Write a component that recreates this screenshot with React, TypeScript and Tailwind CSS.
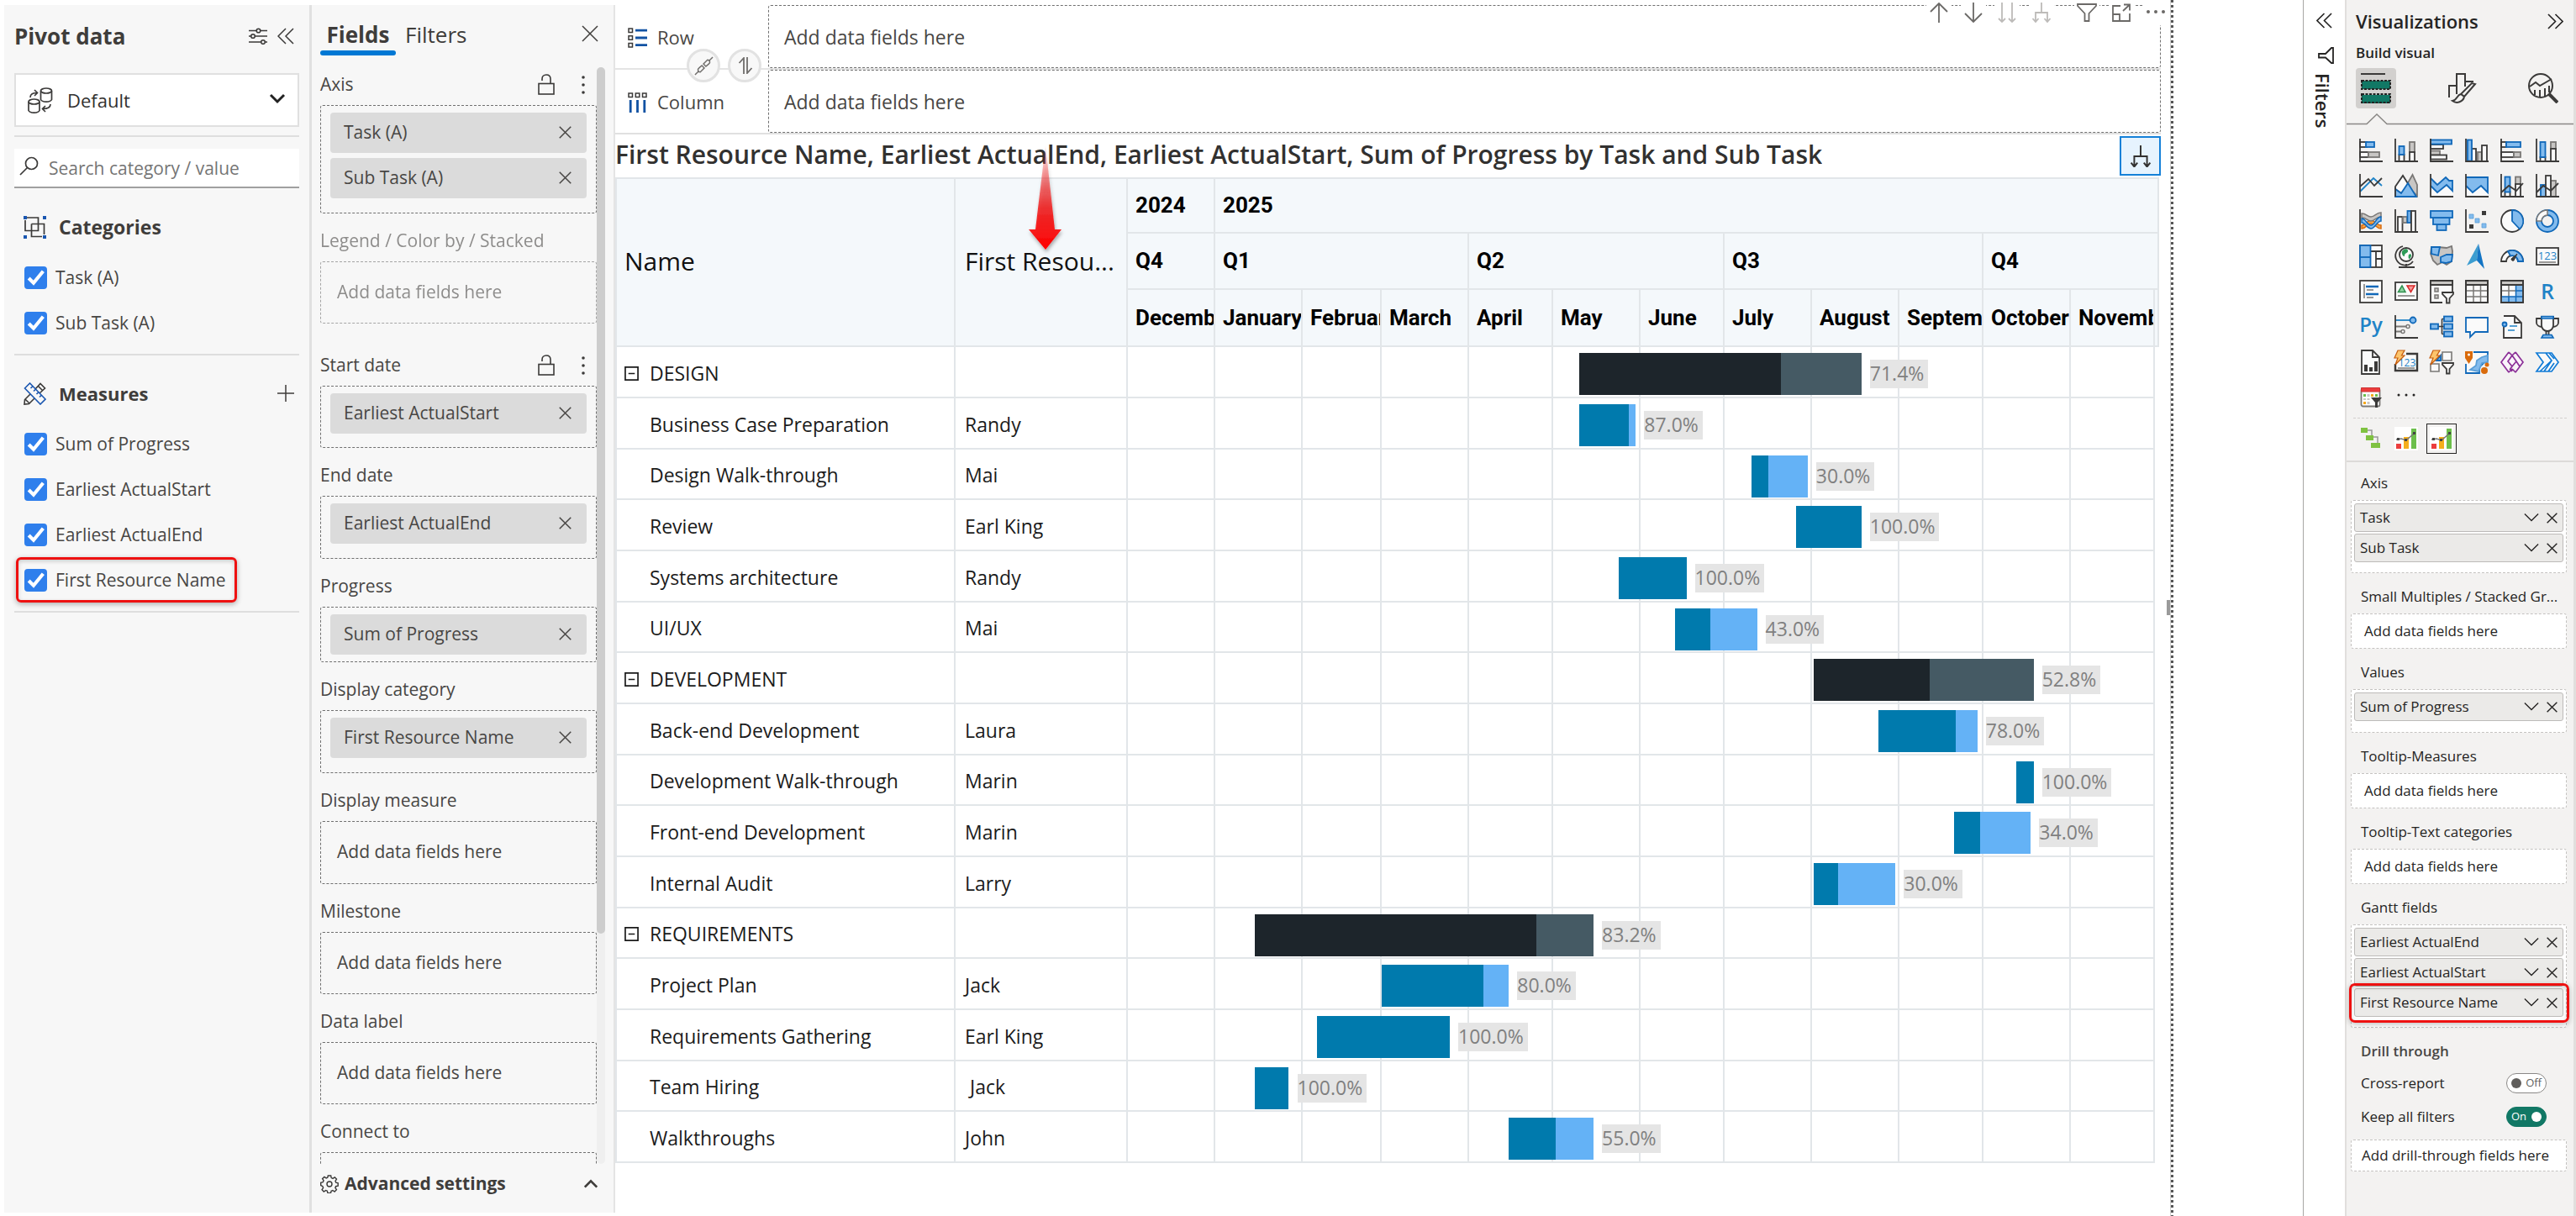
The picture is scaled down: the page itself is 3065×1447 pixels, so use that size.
import React from "react";

const K = "#3b3a39";
const B = "#1068b9";
const L = "#83bbed";
const G = "#7a7876";
const S = "#c8c6c4";
const W = "#fafafa";

/* ---------- shared icons ---------- */

type IconProps = { d: string; size?: number; box?: number; width?: number; className?: string };

function Line({ d, size = 20, box = 20, width = 2, className = "" }: IconProps) {
  return (
    <svg width={size} height={size} viewBox={`0 0 ${box} ${box}`} fill="none" stroke="currentColor" strokeWidth={width} className={`shrink-0 ${className}`} aria-hidden="true">
      <path d={d} />
    </svg>
  );
}

const CROSS = "M1 1L19 19M19 1L1 19";
const CHEVRONS_LEFT = "M10 1L1 10L10 19M19 1L10 10L19 19";
const CHEVRONS_RIGHT = "M10 1L19 10L10 19M1 1L10 10L1 19";

function Lock() {
  return (
    <svg width="20" height="25" viewBox="0 0 20 25" fill="none" stroke={K} strokeWidth="1.6" aria-hidden="true">
      <rect x="1" y="11.5" width="18" height="12.5" />
      <path d="M5 8V6C5 3 7 1 10 1s5 2 5 5v5.500" />
    </svg>
  );
}

function Kebab() {
  return (
    <svg width="4" height="22" viewBox="0 0 4 22" fill={K} aria-hidden="true">
      <circle cx="2" cy="2" r="1.8" />
      <circle cx="2" cy="11" r="1.8" />
      <circle cx="2" cy="20" r="1.8" />
    </svg>
  );
}

/* ---------- pivot data panel ---------- */

function CheckItem({ label, marked = false }: { label: string; marked?: boolean }) {
  return (
    <label className="relative flex h-[54px] w-max items-center gap-[10px] pl-3 pt-[2px] text-[21px] text-[#484644]">
      <span className="relative -mt-[2px] flex size-[27px]">
        <input type="checkbox" defaultChecked className="size-[27px] appearance-none rounded-[4px] border-2 border-gray-500 bg-white checked:border-[#2f7fec] checked:bg-[#2f7fec]" />
        <svg viewBox="0 0 26 26" className="pointer-events-none absolute inset-0" fill="none" stroke="#fff" strokeWidth="4" aria-hidden="true">
          <path d="M5 13.500L10.500 19L21.500 5.500" />
        </svg>
      </span>
      {label}
      {marked && <span className="pointer-events-none absolute inset-y-0 -right-[13px] left-[2px] rounded-[6px] border-[3px] border-[#ee1111] shadow-[0_2px_6px_rgba(0,0,0,0.3),inset_0_2px_5px_rgba(0,0,0,0.18)]" />}
    </label>
  );
}

const Divider = () => <hr className="mt-[10px] border-t-2 border-[#dedede]" />;

function PivotPanel() {
  return (
    <section className="w-[363px] shrink-0 bg-[#f7f7f7] px-3">
      <header className="flex h-[74px] items-center">
        <h2 className="grow text-[26px] font-bold text-[#3f3d3b]">Pivot data</h2>
        <button aria-label="Settings" className="mr-[12px]">
          <svg width="22" height="20" viewBox="0 0 22 20" fill="none" stroke={K} strokeWidth="1.6" aria-hidden="true">
            <path d="M0 3.500H9M14 3.500H22M0 10H2.500M7.500 10H22M0 17H14M19.500 17H22" />
            <circle cx="11.500" cy="3.500" r="2.300" />
            <circle cx="5" cy="10" r="2.300" />
            <circle cx="17" cy="17" r="2.300" />
          </svg>
        </button>
        <button aria-label="Collapse" className="mr-[6px] text-[#3b3a39]">
          <Line d={CHEVRONS_LEFT} width={1.5} />
        </button>
      </header>
      <div className="relative mt-[7px] h-16">
        <select aria-label="Data source" className="size-full appearance-none border-2 border-[#e0e0e0] bg-white pl-[61px] text-[22px] text-[#323130]">
          <option>Default</option>
        </select>
        <svg width="30" height="31" viewBox="0 0 30 31" className="pointer-events-none absolute left-[16px] top-[17px]" fill="none" stroke={K} strokeWidth="1.7" aria-hidden="true">
          <ellipse cx="22" cy="4" rx="6.500" ry="3" />
          <path d="M15.500 4V14.500C17 18 27 18 28.500 14.500V4" />
          <ellipse cx="7.500" cy="17" rx="6.500" ry="3" />
          <path d="M1 17V27.500C2.500 31 12.500 31 14 27.500V17M3 12C3 8 6 6.500 11 6.500M8 3L11.500 6.500L8 10M27 20C27 24 24 25.500 18 25.500M21 22L17.500 25.500L21 29" />
        </svg>
        <Line d="M2 6L10 14L18 6" width={3} className="pointer-events-none absolute right-[16px] top-[20px] text-[#222]" />
      </div>
      <Divider />
      <label className="mt-[14px] flex h-[47px] items-center gap-3 border-b-2 border-[#a0a0a0] bg-white pl-[6px]">
        <svg width="23" height="23" viewBox="0 0 23 23" fill="none" stroke={K} strokeWidth="1.7" className="-mt-1 shrink-0" aria-hidden="true">
          <circle cx="14.500" cy="8.500" r="7" />
          <path d="M9.500 13.500L1 22" />
        </svg>
        <input aria-label="Search category / value" placeholder="Search category / value" className="w-full min-w-0 pt-[3px] text-[21px] outline-none placeholder:text-[#757575]" />
      </label>
      <h3 className="mb-[11px] mt-[24px] flex h-11 items-center gap-[15px] pl-[11px] text-[23px] font-bold text-[#3f3d3b]">
        <svg width="27" height="27" viewBox="0 0 27 27" fill="none" stroke={K} strokeWidth="1.7" aria-hidden="true">
          <path d="M5 2H17.500V17.500H2V5M9.500 9.500H24.500V22M22 24.500H9.500V9.500M4 2H7" />
          <path d="M0 0h4v4H0zM23 0h4v4h-4zM0 23h4v4H0zM23 23h4v4h-4z" fill="#1a56b0" stroke="none" />
        </svg>
        Categories
      </h3>
      <CheckItem label="Task (A)" />
      <CheckItem label="Sub Task (A)" />
      <Divider />
      <h3 className="mb-[11px] mt-[23px] flex h-11 items-center gap-[15px] pl-[11px] text-[22px] font-bold text-[#3f3d3b]">
        <svg width="27" height="27" viewBox="0 0 27 27" fill="none" stroke={K} strokeWidth="1.6" aria-hidden="true">
          <path d="M8 14L1.500 20.500L1 26L6.500 25.500L13 19M14 8L20 1.500L25.500 7L19 13M17.500 4.500L22.500 9.500M2 20L7 25" />
          <path d="M1.500 7L7.500 1L26 20L20 26ZM8.500 7L11 4.500M12 10.500L14.500 8M15.500 14L18 11.500M19 17.500L21.500 15" stroke="#1a56b0" fill="#f7f7f7" />
        </svg>
        <span className="grow">Measures</span>
        <button aria-label="Add measure" className="mr-[6px]">
          <Line d="M10 0V20M0 10H20" width={1.500} />
        </button>
      </h3>
      <CheckItem label="Sum of Progress" />
      <CheckItem label="Earliest ActualStart" />
      <CheckItem label="Earliest ActualEnd" />
      <CheckItem label="First Resource Name" marked />
      <Divider />
    </section>
  );
}

/* ---------- fields panel ---------- */

function Chip({ label }: { label: string }) {
  return (
    <div className="flex h-12 items-center justify-between rounded-[4px] bg-[#dbdbdb] pl-4 pr-[18px] text-[21px] text-[#484644]">
      {label}
      <button aria-label={`Remove ${label}`}>
        <Line d={CROSS} size={15} width={2} />
      </button>
    </div>
  );
}

type FieldProps = { title: string; chips?: string[]; height: string; tools?: boolean; muted?: boolean; gap?: string };

function Field({ title, chips, height, tools, muted, gap = "mb-[19px]" }: FieldProps) {
  return (
    <div className={`${gap} ${muted ? "opacity-60" : ""}`}>
      <div className="mb-[10px] flex h-7 items-center text-[21px] text-[#484644]">
        <span className="grow">{title}</span>
        {tools && (
          <>
            <button aria-label={`Lock ${title}`} className="mr-[32px]">
              <Lock />
            </button>
            <button aria-label={`${title} options`} className="mr-[14px]">
              <Kebab />
            </button>
          </>
        )}
      </div>
      <div className={`${height} flex flex-col gap-[6px] rounded-[3px] border border-dashed border-[#707070] px-[11px] pt-[8px]`}>
        {chips ? chips.map((c) => <Chip key={c} label={c} />) : <p className="flex h-14 items-center pl-2 text-[21px] text-[#484644]">Add data fields here</p>}
      </div>
    </div>
  );
}

function FieldsPanel() {
  return (
    <section className="flex w-[362px] shrink-0 flex-col border-l-[3px] border-[#e0e0e0] bg-[#f7f7f7]">
      <header className="flex h-[72px] items-stretch pl-[10px] text-[26px] text-[#3f3d3b]">
        <div role="tablist" className="flex grow">
          <button role="tab" aria-selected="true" className="relative w-[90px] pt-[4px] font-bold">
            Fields
            <span className="absolute bottom-[8px] left-0 h-[6px] w-full rounded-full bg-[#0078d4]" />
          </button>
          <button role="tab" aria-selected="false" className="pl-[11px] pt-[4px]">
            Filters
          </button>
        </div>
        <button aria-label="Close" className="mr-[18px]">
          <Line d={CROSS} width={1.500} />
        </button>
      </header>
      <div className="flex min-h-0 grow">
        <div className="w-[339px] overflow-hidden pl-[10px] pt-[13px]">
          <Field title="Axis" chips={["Task (A)", "Sub Task (A)"]} height="h-[129px]" tools />
          <Field title="Legend / Color by / Stacked" height="h-[74px]" muted gap="mb-[36px]" />
          <Field title="Start date" chips={["Earliest ActualStart"]} height="h-[74px]" tools />
          <Field title="End date" chips={["Earliest ActualEnd"]} height="h-[75px]" />
          <Field title="Progress" chips={["Sum of Progress"]} height="h-[66px]" />
          <Field title="Display category" chips={["First Resource Name"]} height="h-[75px]" />
          <Field title="Display measure" height="h-[75px]" />
          <Field title="Milestone" height="h-[74px]" />
          <Field title="Data label" height="h-[74px]" />
          <Field title="Connect to" chips={[]} height="h-[74px]" />
        </div>
        <div className="mt-[6px] w-[10px] shrink-0 rounded-full bg-[#efefef]">
          <div className="h-[79%] rounded-full bg-[#cdcdcd]" />
        </div>
      </div>
      <button className="flex h-[58px] shrink-0 items-center pb-[10px] pl-[10px] pr-[18px] text-left text-[21px] font-bold text-[#3f3d3b]">
        <svg width="22" height="22" viewBox="0 0 22 22" fill="none" stroke={K} strokeWidth="1.400" className="mr-[7px]" aria-hidden="true">
          <circle cx="11" cy="11" r="3" />
          <path d="M9.300 1h3.400l.5 2.600 1.800.8 2.300-1.500 2.200 2.200-1.500 2.300.7 1.800 2.500.6v3.400l-2.600.5-.7 1.800 1.500 2.200-2.300 2.300-2.200-1.500-1.800.8-.6 2.500H8.900l-.5-2.600-1.800-.7-2.300 1.500-2.200-2.300 1.500-2.200-.8-1.900L.700 12.600V9.300l2.600-.6.8-1.800-1.500-2.200 2.300-2.300 2.200 1.500 1.700-.7z" />
        </svg>
        <span className="grow">Advanced settings</span>
        <Line d="M2 14L10 6L18 14" size={18} width={3} />
      </button>
    </section>
  );
}

/* ---------- gantt ---------- */

const MONTHS: { name: string; col: string; cell: string }[] = [
  { name: "December", col: "w-[104px]", cell: "grow-[104]" },
  { name: "January", col: "w-[104px]", cell: "grow-[104]" },
  { name: "February", col: "w-[94px]", cell: "grow-[94]" },
  { name: "March", col: "w-[104px]", cell: "grow-[104]" },
  { name: "April", col: "w-[100px]", cell: "grow-[100]" },
  { name: "May", col: "w-[104px]", cell: "grow-[104]" },
  { name: "June", col: "w-[100px]", cell: "grow-[100]" },
  { name: "July", col: "w-[104px]", cell: "grow-[104]" },
  { name: "August", col: "w-[104px]", cell: "grow-[104]" },
  { name: "September", col: "w-[100px]", cell: "grow-[100]" },
  { name: "October", col: "w-[104px]", cell: "grow-[104]" },
  { name: "November", col: "w-[100px]", cell: "grow-[100]" },
];
const TOTAL_DAYS = 365;

/* start and length are counted in days from 1 December 2024 */
type Task = { name: string; who?: string; start: number; length: number; progress: number; group?: boolean };

const TASKS: Task[] = [
  { name: "DESIGN", start: 160.4, length: 100.3, progress: 71.4, group: true },
  { name: "Business Case Preparation", who: "Randy", start: 160.4, length: 20.1, progress: 87 },
  { name: "Design Walk-through", who: "Mai", start: 221.5, length: 20.1, progress: 30 },
  { name: "Review", who: "Earl King", start: 237.5, length: 23.2, progress: 100 },
  { name: "Systems architecture", who: "Randy", start: 174.4, length: 24.1, progress: 100 },
  { name: "UI/UX", who: "Mai", start: 194.5, length: 29.1, progress: 43 },
  { name: "DEVELOPMENT", start: 243.6, length: 78.3, progress: 52.8, group: true },
  { name: "Back-end Development", who: "Laura", start: 266.6, length: 35.3, progress: 78 },
  { name: "Development Walk-through", who: "Marin", start: 315.8, length: 6.1, progress: 100 },
  { name: "Front-end Development", who: "Marin", start: 293.7, length: 27.2, progress: 34 },
  { name: "Internal Audit", who: "Larry", start: 243.6, length: 29.2, progress: 30 },
  { name: "REQUIREMENTS", start: 45.1, length: 120.4, progress: 83.2, group: true },
  { name: "Project Plan", who: "Jack", start: 90.3, length: 45.1, progress: 80 },
  { name: "Requirements Gathering", who: "Earl King", start: 67.1, length: 47.3, progress: 100 },
  { name: "Team Hiring", who: "\u00a0Jack", start: 45.1, length: 12.1, progress: 100 },
  { name: "Walkthroughs", who: "John", start: 135.4, length: 30.1, progress: 55 },
];

function Bar({ task }: { task: Task }) {
  const back = task.group ? "bg-[#455a64]" : "bg-[#64b2f6]";
  const front = task.group ? "bg-[#1d252b]" : "bg-[#007aad]";
  return (
    <>
      <div className={`absolute top-[7px] h-[50px] ${back}`} style={{ left: `${(task.start / TOTAL_DAYS) * 100}%`, width: `${(task.length / TOTAL_DAYS) * 100}%` }}>
        <div className={`h-full ${front}`} style={{ width: `${task.progress}%` }} />
      </div>
      <span className="absolute top-[15px] ml-[10px] h-[34px] bg-[#e5e5e5] pr-[5px] text-[23px] leading-[32px] text-[#808080]" style={{ left: `${((task.start + task.length) / TOTAL_DAYS) * 100}%` }}>
        {task.progress.toFixed(1)}%
      </span>
    </>
  );
}

const EDGE = "border-b-2 border-r-2 border-[#e2e6e9]";
const HEAD = `${EDGE} overflow-hidden whitespace-nowrap bg-[#f4f8fb] pl-[9px] text-left font-[Roboto,sans-serif] text-[26px] font-bold text-black`;

function Gantt() {
  return (
    <div className="pr-[16px]">
      <table className="w-full table-fixed border-separate border-spacing-0 border-l-2 border-t-2 border-[#e2e6e9]">
        <colgroup>
          <col className="w-[403px]" />
          <col className="w-[205px]" />
          {MONTHS.map((m) => (
            <col key={m.name} className={m.col} />
          ))}
          <col className="w-[5px]" />
        </colgroup>
        <thead>
          <tr className="h-[65px]">
            <th rowSpan={3} className={`${EDGE} bg-[#f4f8fb] pb-[3px] pl-[9px] text-left text-[30px] font-normal text-[#111]`}>
              Name
            </th>
            <th rowSpan={3} className={`${EDGE} relative bg-[#f4f8fb] pb-[3px] pl-[11px] text-left text-[30px] font-normal text-[#111]`}>
              First Resou...
              <svg width="48" height="136" viewBox="0 0 48 136" className="pointer-events-none absolute -top-[44px] left-[83px]" aria-hidden="true">
                <defs>
                  <linearGradient id="arrowFade" x1="0" y1="0" x2="0" y2="1">
                    <stop offset="0" stopColor="#f01818" stopOpacity="0.050" />
                    <stop offset="0.6" stopColor="#f01818" stopOpacity="0.850" />
                    <stop offset="1" stopColor="#ff0000" />
                  </linearGradient>
                  <filter id="arrowShadow" x="-30%" y="-10%" width="160%" height="125%">
                    <feDropShadow dx="1" dy="3" stdDeviation="2" floodOpacity="0.350" />
                  </filter>
                </defs>
                <path d="M24 4L35 104H43L24 128L4 104H12Z" fill="url(#arrowFade)" filter="url(#arrowShadow)" />
              </svg>
            </th>
            <th className={HEAD}>2024</th>
            <th colSpan={12} className={HEAD}>
              2025
            </th>
          </tr>
          <tr className="h-[67px]">
            <th className={HEAD}>Q4</th>
            <th colSpan={3} className={HEAD}>Q1</th>
            <th colSpan={3} className={HEAD}>Q2</th>
            <th colSpan={3} className={HEAD}>Q3</th>
            <th colSpan={3} className={HEAD}>Q4</th>
          </tr>
          <tr className="h-[68px]">
            {MONTHS.map((m) => (
              <th key={m.name} className={HEAD}>
                {m.name}
              </th>
            ))}
            <th className={`${EDGE} bg-[#f4f8fb]`} />
          </tr>
        </thead>
        <tbody>
          {TASKS.map((task) => (
            <tr key={task.name} className="h-[61px] text-[23px] text-[#1b1b1b] [&:nth-child(3n)]:h-[60px]">
              <td className={`${EDGE} pt-[3px]`}>
                <div className={`flex items-center ${task.group ? "gap-[13px] pl-[9px]" : "pl-[39px]"}`}>
                  {task.group && (
                    <button aria-label={`Collapse ${task.name}`}>
                      <Line d="M1 1H17V17H1ZM5 9H13" size={17} box={18} width={1.800} />
                    </button>
                  )}
                  {task.name}
                </div>
              </td>
              <td className={`${EDGE} pl-[11px] pt-[3px]`}>{task.who}</td>
              <td colSpan={12} className="relative h-px p-0">
                <div className="flex h-full">
                  {MONTHS.map((m) => (
                    <div key={m.name} className={`${EDGE} ${m.cell} basis-0`} />
                  ))}
                </div>
                <Bar task={task} />
              </td>
              <td />
            </tr>
          ))}
        </tbody>
      </table>
    </div>
  );
}

function DropRow({ label, icon }: { label: string; icon: React.ReactNode }) {
  return (
    <div className="flex h-[75px] items-stretch">
      <div className="flex w-[182px] shrink-0 items-center gap-[12px] pl-[15px] pt-[2px] text-[22px] text-[#484644]">
        {icon}
        {label}
      </div>
      <div className="flex grow items-center rounded-[3px] border border-dashed border-[#707070] pl-[18px] pt-[2px] text-[23px] text-[#484644]">Add data fields here</div>
    </div>
  );
}

function Toolbar() {
  const cell = "flex h-[30px] w-[30px] items-center justify-center bg-white";
  return (
    <div className="absolute -right-[9px] -top-[6px] flex items-center text-[#6b6967]">
      <button aria-label="Drill up" className={`${cell} mr-[11px]`}><Line d="M12 24V1M2 11L12 1L22 11" size={24} box={24} width={1.800} /></button>
      <button aria-label="Drill down" className={`${cell} mr-[10px]`}><Line d="M12 0V23M2 13L12 23L22 13" size={24} box={24} width={1.800} /></button>
      <button aria-label="Next level" className={`${cell} mr-[11px] text-[#bdbbb9]`}><Line d="M6 0V23M2 19L6 23L10 19M18 0V23M14 19L18 23L22 19" size={24} box={24} width={1.800} /></button>
      <button aria-label="Expand all" className={`${cell} mr-[24px] text-[#bdbbb9]`}><Line d="M12 0V11M5 23V12H19V23M1.500 19L5 23L8.500 19M15.500 19L19 23L22.500 19" size={24} box={24} width={1.800} /></button>
      <button aria-label="Filters on visual" className={`${cell} mr-[11px]`}><Line d="M1 2H23V4L14.500 13V22H9.500V13L1 4Z" size={24} box={24} width={1.800} /></button>
      <button aria-label="Focus mode" className={`${cell} mr-[11px]`}><Line d="M11 4H2V22H22V13M14 10L22 2.500M15 2.500H22V9.500M2 14H10V22" size={24} box={24} width={1.800} /></button>
      <button aria-label="More options" className={cell}>
        <svg width="24" height="24" viewBox="0 0 24 24" fill="#6b6967" aria-hidden="true"><circle cx="3" cy="11" r="2" /><circle cx="12" cy="11" r="2" /><circle cx="21" cy="11" r="2" /></svg>
      </button>
    </div>
  );
}

function Visual() {
  return (
    <main className="relative min-w-0 grow border-l-2 border-[#e4e4e4] bg-white">
      <div className="relative mr-[11px] border-b-2 border-[#e0e0e0]">
        <DropRow
          label="Row"
          icon={
            <svg width="23" height="24" viewBox="0 0 23 24" fill="none" aria-hidden="true">
              <path d="M1 1h4.500v4.500H1zM1 9.700h4.500v4.500H1zM1 18.500h4.500v4.500H1z" stroke={K} strokeWidth="1.500" />
              <path d="M9 3.200H23M9 12H23M9 20.700H23" stroke="#1152a3" strokeWidth="2.800" />
            </svg>
          }
        />
        <div className="h-[2px] bg-[#e4e4e4]" />
        <DropRow
          label="Column"
          icon={
            <svg width="23" height="24" viewBox="0 0 23 24" fill="none" aria-hidden="true">
              <path d="M1 1h4.500v4.500H1zM9.300 1h4.500v4.500H9.300zM17.500 1H22v4.500h-4.500z" stroke={K} strokeWidth="1.500" />
              <path d="M3.200 9V24M11.500 9V24M19.800 9V24" stroke="#1152a3" strokeWidth="2.800" />
            </svg>
          }
        />
        <div className="absolute left-[85px] top-[52px] flex gap-[9px] text-[#6f6d6b]">
          <button aria-label="Link fields" className="flex size-10 items-center justify-center rounded-full border-[3px] border-[#e2e2e2] bg-[#f8f8f8]">
            <Line d="M1 23L6 18M18 6L23 1M7.500 19.500L12.500 14.500L9.500 11.500L6 14.500C3.500 16.500 4.500 19.500 7.500 19.500ZM16.500 4.500L11.500 9.500L14.500 12.500L18 9.500C20.500 7.500 19.500 4.500 16.500 4.500Z" size={23} box={24} width={1.500} />
          </button>
          <button aria-label="Swap fields" className="flex size-10 items-center justify-center rounded-full border-[3px] border-[#e2e2e2] bg-[#f8f8f8]">
            <Line d="M9 20V1L3.500 7M13 0V19L18.500 13" size={20} width={1.800} />
          </button>
        </div>
        <Toolbar />
      </div>
      <div className="mr-[11px] flex h-[51px] items-center justify-between">
        <h1 className="truncate pb-[4px] text-[30px] font-semibold leading-[46px] text-[#323130]">First Resource Name, Earliest ActualEnd, Earliest ActualStart, Sum of Progress by Task and Sub Task</h1>
        <button aria-label="Expand levels" className="flex h-[47px] w-[49px] shrink-0 items-center justify-center border-2 border-[#1480d8] bg-[#e6f3fe] text-[#323130]">
          <Line d="M12 0V11M5 23V12H19V23M1.500 19L5 23.500L8.500 19M15.500 19L19 23.500L22.500 19" size={26} box={24} width={1.800} />
        </button>
      </div>
      <Gantt />
      <span className="absolute right-0 top-[708px] h-[18px] w-[4px] bg-[#9a9a9a]" />
    </main>
  );
}

/* ---------- visualizations pane ---------- */

const AXES = <path d="M1 0V27H28" stroke={K} />;
const r = (x: number, y: number, w: number, h: number, tone: "b" | "g" | "w") => (
  <rect x={x} y={y} width={w} height={h} fill={tone === "b" ? L : tone === "g" ? S : W} stroke={tone === "b" ? B : tone === "g" ? G : K} />
);
const FUNNEL = <path d="M15 15H28V17L23.500 22V27.500H20V22L15 17Z" fill={W} stroke={K} />;
const BOLT = <path d="M4 0H12L8.500 6H12L1 17L4 9H0Z" fill="#fcc46c" stroke="#c75c0c" strokeWidth="1.200" />;

const VISUALS: { name: string; art: React.ReactNode }[] = [
  { name: "Stacked bar chart", art: <>{r(1, 4, 8, 6, "w")}{r(8, 4, 10, 6, "b")}{r(1, 16, 10, 6, "w")}{r(11, 16, 13, 6, "g")}{AXES}</> },
  { name: "Stacked column chart", art: <>{r(5.5, 19, 6, 8, "w")}{r(5.5, 9, 6, 10, "b")}{r(18, 4, 6, 12, "g")}{r(18, 16, 6, 11, "w")}{AXES}</> },
  { name: "Clustered bar chart", art: <>{r(1, 7, 15, 5, "w")}{r(1, 14.5, 11, 5, "g")}{r(1, 19.5, 19, 5, "w")}{r(1, 1.5, 25, 5, "b")}{AXES}</> },
  { name: "Clustered column chart", art: <>{r(8, 12, 5, 15, "w")}{r(15, 16, 5, 11, "g")}{r(20, 8, 6, 19, "w")}{r(3, 1.5, 5, 25, "b")}{AXES}</> },
  { name: "100% stacked bar chart", art: <>{r(1, 4, 6, 6, "w")}{r(7, 4, 17, 6, "b")}{r(1, 16, 15, 6, "w")}{r(16, 16, 8, 6, "g")}{AXES}</> },
  { name: "100% stacked column chart", art: <>{r(5.5, 22, 6, 5, "w")}{r(5.5, 4, 6, 18, "b")}{r(18, 4, 6, 8, "g")}{r(18, 12, 6, 15, "w")}{AXES}</> },
  { name: "Line chart", art: <><path d="M1 21L17 5L27 14" stroke="#1f83c7" /><path d="M1 15L11 6L18 14L27 5" stroke={K} />{AXES}</> },
  { name: "Area chart", art: <><path d="M14 14L21.5 1L27 13V26Z" fill={S} stroke={G} /><path d="M1 18V15L10 2L17 13L8 23Z" fill={W} stroke={K} /><path d="M1 18L8 23L16 11L26 27H1Z" fill={L} stroke={B} /><path d="M1 16V27" stroke={K} /></> },
  { name: "Stacked area chart", art: <><path d="M1 14L9 22L20 13L27 20V27H1Z" fill={W} /><path d="M1 5L9 13L19 4L23 8H27V20L20 13L9 22L1 14" fill={L} stroke={B} />{AXES}</> },
  { name: "100% stacked area chart", art: <><path d="M1 14L9 22L19 14L27 22V27H1Z" fill={W} /><path d="M1 4H27V22L19 14L9 22L1 14" fill={L} stroke={B} />{AXES}</> },
  { name: "Line and stacked column chart", art: <>{r(5.5, 21, 6, 6, "w")}{r(5.5, 3.5, 6, 18, "b")}{r(18, 3.5, 6, 9, "g")}{r(18, 12, 6, 15, "w")}<path d="M1 22L10 14L19 20L27 11" stroke={K} />{AXES}</> },
  { name: "Line and clustered column chart", art: <>{r(6, 13, 6, 14, "b")}{r(18, 8, 6, 19, "g")}{r(12, 2, 6, 25, "w")}<path d="M1 22L9 14L18 20L27 11" stroke={K} />{AXES}</> },
  { name: "Ribbon chart", art: <><path d="M3 19C9 19 9 13 14 13S20 19 26 19V23C20 23 19 17 14 17S9 23 3 23Z" fill="#f7a64a" stroke="#d96b0c" strokeWidth="1.500" /><path d="M3 5C9 5 9 9 14 9S20 4 26 4V9C20 9 19 14 14 14S9 10 3 10Z" fill={S} stroke={G} strokeWidth="1.500" /><path d="M3 11C8 11 9 19 14 19S20 9 26 9V14C21 14 19 23 14 23S8 16 3 16Z" fill={L} stroke={B} strokeWidth="1.500" />{AXES}</> },
  { name: "Waterfall chart", art: <>{r(4, 9, 5.5, 18, "w")}{r(10, 9, 5, 7, "g")}{r(15.500, 2, 4, 14, "b")}{r(20, 2, 5, 25, "w")}{AXES}</> },
  { name: "Funnel chart", art: <>{r(8.5, 18, 11, 7, "b")}{r(4, 10, 19.5, 8, "b")}{r(1, 2, 26, 8, "b")}</> },
  { name: "Scatter chart", art: <>{AXES}<path d="M20 2h5v5h-5zM5 18h5v5H5z" fill={K} /><path d="M5 6h5v5H5zM12 11h5v5h-5zM20 17h5v5h-5z" fill={L} stroke="#5a9fd8" strokeWidth="0.800" /></> },
  { name: "Pie chart", art: <><circle cx="14" cy="14" r="13" fill={W} stroke={K} /><path d="M14 1A13 13 0 0 1 23 23.500L14 14Z" fill={L} stroke={B} /></> },
  { name: "Donut chart", art: <><circle cx="14" cy="14" r="10" stroke={W} strokeWidth="6" /><path d="M14 4A10 10 0 1 1 4 14" stroke={L} strokeWidth="6" /><circle cx="14" cy="14" r="13" stroke={B} /><circle cx="14" cy="14" r="7" stroke={B} /><path d="M14 1A13 13 0 0 0 1 14H7A7 7 0 0 1 14 7Z" stroke={G} fill={W} strokeWidth="1.500" /></> },
  { name: "Treemap", art: <>{r(1, 1, 26, 26, "w")}<path d="M13.500 8H27M20 8V27M20 17H27" stroke={K} />{r(1, 1, 12.500, 26, "b")}<path d="M1 15H13.500" stroke={B} /></> },
  { name: "Map", art: <><circle cx="14" cy="12" r="8" fill={W} stroke={K} /><path d="M9 8C11 5 15 4 16 7S12 10 12 13S8 12 9 8ZM17 12C20 10 21 13 19 16S16 15 17 12Z" fill="#2d9b57" /><path d="M10 2A11.500 11.500 0 1 0 22 20M14 23V26M5 27H24" stroke={K} /></> },
  { name: "Filled map", art: <><path d="M2 3L10 3L20 4L26 2L27 8L26 20L20 24L15 21L9 24L4 19L1 11Z" fill={S} stroke={G} /><path d="M2 3H12L10 13L2 11ZM13 15L20 12H27L26 20L19 22L13 21Z" fill={L} stroke={B} /></> },
  { name: "Azure map", art: <><path d="M16 -1L2 25L14 19Z" fill="#3c9dd0" /><path d="M16 -1L23 29L14 19Z" fill="#1374c4" /></> },
  { name: "Gauge", art: <><path d="M1 20A13 13 0 0 1 27 20H21A7 7 0 0 0 7 20Z" fill={W} stroke={K} /><path d="M9 8A13 13 0 0 1 27 20H21A7 7 0 0 0 12 13.500Z" fill={L} stroke={B} /><path d="M13 17L20 11L16 19A2 2 0 0 1 13 17Z" fill={K} stroke={K} strokeWidth="1" /></> },
  { name: "Card", art: <>{r(1, 4, 26, 20, "w")}<text x="14" y="18" fontSize="13" textAnchor="middle" fill="#1f83c7">123</text><path d="M4 21H24" stroke={G} strokeWidth="1.500" /></> },
  { name: "Multi-row card", art: <>{r(1, 1, 26, 26, "w")}<path d="M6 5V22M9 12H17M9 21H17" stroke={G} strokeWidth="1.500" /><path d="M8 8H23M8 17H23" stroke={B} strokeWidth="2.600" /></> },
  { name: "KPI", art: <>{r(1, 3, 26, 21, "w")}<path d="M4.500 14.500L9 7L13 14.500Z" fill="#8fd19e" stroke="#2f8f4e" strokeWidth="1.500" /><path d="M15 7H24L19.500 14.500Z" fill="#f59a9a" stroke="#d92b2b" strokeWidth="1.500" /><path d="M4 19H24" stroke={G} strokeWidth="1.500" /></> },
  { name: "Slicer", art: <><path d="M15 27H1V1H27V14" fill={W} stroke={K} /><path d="M1 1H27V6H1Z" fill={S} stroke={K} /><path d="M6 10h4v4H6zM6 18h4v4H6z" fill={S} stroke={G} strokeWidth="1.500" />{FUNNEL}</> },
  { name: "Table", art: <>{r(1, 1, 26, 26, "w")}<path d="M10 6V27M18.500 6V27M1 13H27M1 20H27" stroke={G} strokeWidth="1.500" /><path d="M1 1H27V27H1ZM1 6H27" stroke={K} /><path d="M2 2H26V5H2Z" fill={S} /></> },
  { name: "Matrix", art: <>{r(1, 1, 26, 26, "w")}<path d="M18.500 6H27V27H1V20H18.500Z" fill={L} /><path d="M10 6V20M1 13H18.500" stroke={G} strokeWidth="1.500" /><path d="M18.500 6V27M10 20V27M1 20H27M18.500 13H27" stroke={B} strokeWidth="1.500" /><path d="M1 1H27V6H1ZM1 6V27H27V6" fill="none" stroke={K} /><path d="M2 2H26V5H2Z" fill={S} /></> },
  { name: "R script visual", art: <text x="14" y="23" fontSize="25" fontWeight="600" textAnchor="middle" fill="#1f83c7">R</text> },
  { name: "Python visual", art: <text x="14" y="20" fontSize="24" fontWeight="600" textAnchor="middle" fill="#1f83c7">Py</text> },
  { name: "Key influencers", art: <><path d="M1 6H19" stroke="#1f83c7" /><circle cx="22" cy="6" r="3.500" fill={L} stroke={B} /><path d="M1 13.500H14M1 19.500H8" stroke={G} /><circle cx="16" cy="13.500" r="2" stroke={G} fill={W} strokeWidth="1.500" /><circle cx="10" cy="19.500" r="2" stroke={G} fill={W} strokeWidth="1.500" />{AXES}</> },
  { name: "Decomposition tree", art: <><path d="M10 13.500H17M14.500 4.500V22.500M14.500 4.500H17M14.500 22.500H17" stroke={K} strokeWidth="1.600" />{r(1, 10.500, 9, 6, "b")}{r(17, 1.500, 10, 6, "b")}{r(17, 10.500, 10, 6, "b")}{r(17, 19.500, 10, 6, "b")}</> },
  { name: "Q&A", art: <path d="M1 3H27V20H12L6 26V20H1Z" fill={W} stroke={B} /> },
  { name: "Narrative", art: <><path d="M4 1H17L25 9V27H4V14M17 1V9H25" fill={W} stroke={K} /><circle cx="5" cy="11" r="2.500" fill={L} stroke={B} /><path d="M11 13H20M9 18H17" stroke="#1f83c7" strokeWidth="1.600" /></> },
  { name: "Metrics", art: <><path d="M7 4H1V9C1 12 4 14 8 14M21 4H27V9C27 12 24 14 20 14" stroke={K} /><path d="M7 2H21V12C21 16 18 19 14 19S7 16 7 12Z" fill={W} stroke={K} /><path d="M12.500 19V23M15.500 19V23" stroke={K} /><path d="M7 1.500H21V4H7ZM7 27L9 23.500H19L21 27Z" fill={L} stroke={B} strokeWidth="1.600" /></> },
  { name: "Paginated report", art: <><path d="M3 0H16L24 8V28H3ZM16 0V8H24" fill={W} stroke={K} /><path d="M6 17h4v8H6zM12 20h4v5h-4zM18 13h4v12h-4z" fill={K} /></> },
  { name: "Card (new)", art: <><path d="M14 4H27V24H1V16" fill={W} stroke={K} strokeWidth="2.400" /><text x="15" y="19" fontSize="12" textAnchor="middle" fill="#1f83c7">123</text><path d="M4 21H24" stroke={G} strokeWidth="1.500" />{BOLT}</> },
  { name: "Slicer (new)", art: <><path d="M15 2h11v10H15zM1 16h10v9H1z" fill={W} stroke={G} strokeWidth="1.600" /><path d="M8 12h5V6z" fill={L} stroke={B} />{FUNNEL}{BOLT}</> },
  { name: "ArcGIS map", art: <><path d="M10 2H27V12L22 15L17 20V27H1V16" fill={W} stroke={B} /><path d="M20 8L27 6V14L20 15L16 25L6 23L13 18L14 12Z" fill={L} stroke="#5a9fd8" /><path d="M0 1H9V9L4.500 16L0 9Z" fill="#d96b0c" /><circle cx="4.500" cy="5" r="1.500" fill="#fff" /><circle cx="23" cy="24" r="4" fill="#d96b0c" /><circle cx="26" cy="17" r="2.500" fill="#d96b0c" /></> },
  { name: "Power Apps", art: <path d="M10 2L1 14L10 26M18 2L27 14L18 26M14 6L10 2M14 6L18 2M14 22L10 26M14 22L18 26M14 6L19 13L14 19L9 13ZM14 19L11.500 22.500L14 25M9 13L12 9M19 13L23 19" fill="#faf4fb" stroke="#8b2f97" strokeWidth="1.700" /> },
  { name: "Power Automate", art: <path d="M1 3H19L27 14L19 25H1L9 14ZM12 3L19 12L5 25M16 3L22 10M19 12L10 25M22 15L15 25" fill={W} stroke="#117bd6" strokeWidth="1.700" /> },
  { name: "Calendar slicer", art: <><rect x="2.500" y="3.500" width="22" height="21" rx="2" fill="#fff" stroke={G} /><path d="M2.500 2.500H24.500V7H2.500Z" fill="#ec3d3d" stroke="#c33" strokeWidth="1" /><path d="M5 10h3v3H5zM19 10h3v3h-3z" fill="#6cbf4b" /><path d="M14 10h3v3h-3zM5 19h3v3H5z" fill="#f5a81c" /><path d="M9.500 10h3v3h-3zM5 15h3v2H5zM9.500 15h3v2h-3zM9.500 19h3v3h-3z" fill={S} /><path d="M14 14H27L22 20V26H19V20Z" fill={K} /></> },
];

const GROWTH = (
  <svg viewBox="0 0 28 28" width="28" height="28" aria-hidden="true">
    <path d="M0 0H28V28H0Z" fill="#fff" />
    <path d="M2 20H8V26H2Z" fill="#ec3d3d" />
    <path d="M11 12H17V26H11Z" fill="#f5ae1c" />
    <path d="M20 2H26V26H20Z" fill="#6cbf4b" />
    <path d="M2 15L8 14L14 16L23 8" fill="none" stroke="#777" strokeWidth="1.500" />
    <path d="M3 13h3v3H3zM12 14h3v3h-3zM22 6h3v3h-3z" fill="#444" />
  </svg>
);

function Pill({ label }: { label: string }) {
  return (
    <div className="flex h-[34px] items-center rounded-[3px] border border-[#bdbbb9] bg-[#ebeae8] px-[6px]">
      <span className="grow">{label}</span>
      <button aria-label={`${label} options`} className="mr-[9px]">
        <Line d="M1 5L10 14L19 5" size={18} width={1.500} />
      </button>
      <button aria-label={`Remove ${label}`}>
        <Line d={CROSS} size={13} width={2.200} />
      </button>
    </div>
  );
}

function Well({ title, pills, height }: { title: string; pills?: string[]; height: string }) {
  return (
    <div className="mb-[14px]">
      <h3 className="mb-[6px] h-7 truncate pl-3 leading-7">{title}</h3>
      <div className={`${height} flex flex-col gap-[2px] rounded-[3px] border border-dashed border-[#c4c2c0] bg-white px-[3px] ${pills ? "pt-[3px]" : "justify-center"}`}>
        {pills ? pills.map((p) => <Pill key={p} label={p} />) : <span className="pl-3">Add data fields here</span>}
      </div>
    </div>
  );
}

function Toggle({ label, on = false }: { label: string; on?: boolean }) {
  return (
    <label className="flex h-10 items-center justify-between pl-3 pr-[24px]">
      {label}
      <span className="relative h-6 w-12">
        <input type="checkbox" role="switch" defaultChecked={on} className="absolute inset-0 appearance-none rounded-full border border-[#8a8886] bg-white checked:border-[#117865] checked:bg-[#117865]" />
        <span className={`pointer-events-none absolute inset-0 flex items-center justify-between px-[6px] text-[13px] ${on ? "flex-row-reverse text-white" : "text-[#605e5c]"}`}>
          <span className={`size-3 rounded-full ${on ? "bg-white" : "bg-[#605e5c]"}`} />
          {on ? "On" : "Off"}
        </span>
      </span>
    </label>
  );
}

function FiltersRail() {
  return (
    <aside className="flex w-[50px] shrink-0 flex-col items-center border-l border-[#a8a6a4] bg-white pt-[15px] text-[#252423]">
      <button aria-label="Expand filters">
        <Line d={CHEVRONS_LEFT} size={19} width={1.700} />
      </button>
      <svg width="20" height="20" viewBox="0 0 20 20" fill="none" stroke="#252423" strokeWidth="1.800" className="ml-1 mt-[22px]" aria-hidden="true">
        <path d="M18 1V19H16L9 12.500H1V8H9L16 1Z" />
      </svg>
      <span className="mr-1 mt-[11px] text-[22px] font-semibold leading-none [writing-mode:vertical-rl]">Filters</span>
    </aside>
  );
}

function VisualizationsPane() {
  return (
    <aside className="w-[275px] shrink-0 border-l-2 border-r-[3px] border-[#e1dfdd] bg-[#f3f2f1] text-[17px] text-[#252423]">
      <header className="flex h-[50px] items-center justify-between pl-[11px] pr-[12px]">
        <h2 className="text-[22px] font-semibold">Visualizations</h2>
        <button aria-label="Collapse">
          <Line d={CHEVRONS_RIGHT} size={19} width={1.700} />
        </button>
      </header>
      <h3 className="h-[31px] pl-[11px] text-[17px] font-semibold leading-[26px]">Build visual</h3>
      <div role="tablist" className="flex items-center justify-between pl-[11px] pr-[12px]">
        <button role="tab" aria-selected="true" aria-label="Build visual" className="flex size-12 items-center justify-center rounded-[4px] bg-[#d2d0ce]">
          <svg width="36" height="36" viewBox="0 0 36 36" aria-hidden="true">
            <path d="M0 1H29" stroke={K} strokeWidth="2" />
            <path d="M1 9H35V19H1ZM1 26H35V36H1Z" fill="#117865" />
            <path d="M1 9H35V19H1ZM1 25H35V35H1Z" fill="none" stroke="#222" strokeWidth="2" strokeDasharray="3 1.500" />
          </svg>
        </button>
        <button role="tab" aria-selected="false" aria-label="Format visual">
          <svg width="34" height="36" viewBox="0 0 34 36" fill="none" stroke={K} strokeWidth="2" aria-hidden="true">
            <path d="M1 29V15H10M10 25V1H20V16M20 10H30" />
            <path d="M32 13L19 28C17 26 16 26 15 25L28 12ZM15 25C10 26 11 32 5 33C10 37 18 34 19 28" fill="#f3f2f1" />
          </svg>
        </button>
        <button role="tab" aria-selected="false" aria-label="Analytics" className="mr-[6px]">
          <svg width="36" height="36" viewBox="0 0 36 36" fill="none" stroke={K} strokeWidth="2" aria-hidden="true">
            <circle cx="15" cy="15" r="14" />
            <path d="M2 16L9 11L14 15L28 7M8 20V26M14 20V29M20 18V28M25 15V23" />
            <path d="M25 25L35 35" strokeWidth="4" />
          </svg>
        </button>
      </div>
      <svg className="mt-[6px] block h-[14px] w-full" aria-hidden="true">
        <path d="M0 12.500H24L36 1L48 12.500H400" fill="none" stroke="#8a8886" strokeWidth="1.500" />
      </svg>
      <div className="mr-1 grid grid-cols-[repeat(6,42px)] gap-y-[14px] pl-[15px] pt-[16px]">
        {VISUALS.map((v) => (
          <button key={v.name} aria-label={v.name} className="size-7">
            <svg width="28" height="28" viewBox="0 0 28 28" fill="none" strokeWidth="1.800" className="overflow-visible" aria-hidden="true">
              {v.art}
            </svg>
          </button>
        ))}
        <button aria-label="More visuals" className="flex size-7 items-start justify-center pt-[9px]">
          <svg width="22" height="4" viewBox="0 0 22 4" fill="#252423" aria-hidden="true">
            <circle cx="2" cy="2" r="1.500" /><circle cx="11" cy="2" r="1.500" /><circle cx="20" cy="2" r="1.500" />
          </svg>
        </button>
      </div>
      <hr className="mx-2 mt-[10px] border-dashed border-[#d2d0ce]" />
      <div className="flex h-[52px] items-center gap-[10px] border-b-2 border-[#dcdad8] pb-[2px] pl-[15px]">
        <button aria-label="Gantt visual" className="mr-[4px]">
          <svg width="28" height="28" viewBox="0 0 28 28" fill="none" aria-hidden="true">
            <path d="M10 4H15V11M17 12H22V19" stroke="#999" strokeWidth="1.500" />
            <path d="M2 1H10V7H2ZM8 10H17V16H8ZM14 19H25V25H14Z" fill="#7fc241" />
          </svg>
        </button>
        <button aria-label="Chart visual">{GROWTH}</button>
        <button aria-label="Pivot visual" className="flex size-9 items-center justify-center border border-[#252423]">{GROWTH}</button>
      </div>
      <div className="pl-[5px] pr-[8px] pt-[11px]">
        <Well title="Axis" pills={["Task", "Sub Task"]} height="h-[87px]" />
        <Well title="Small Multiples / Stacked Gr..." height="h-[42px]" />
        <Well title="Values" pills={["Sum of Progress"]} height="h-[52px]" />
        <Well title="Tooltip-Measures" height="h-[42px]" />
        <Well title="Tooltip-Text categories" height="h-[42px]" />
        <div className="relative">
          <Well title="Gantt fields" pills={["Earliest ActualEnd", "Earliest ActualStart", "First Resource Name"]} height="h-[123px]" />
          <span className="pointer-events-none absolute -left-[2px] -right-[3px] bottom-[6px] h-[47px] rounded-[7px] border-[3px] border-[#ee1111] shadow-[0_2px_6px_rgba(0,0,0,0.25),inset_0_2px_5px_rgba(0,0,0,0.18)]" />
        </div>
        <h3 className="mb-[4px] h-7 pl-3 font-semibold leading-7 text-[#484644]">Drill through</h3>
        <Toggle label="Cross-report" />
        <Toggle label="Keep all filters" on />
        <div className="mt-[7px] flex h-[38px] items-center rounded-[3px] border border-dashed border-[#c4c2c0] bg-white pl-3">Add drill-through fields here</div>
      </div>
    </aside>
  );
}

export default function App() {
  return (
    <div className="flex h-screen overflow-hidden bg-white font-['Open_Sans','Noto_Sans',sans-serif]">
      <div className="flex min-w-0 grow pb-1 pl-[5px] pt-[6px]">
        <PivotPanel />
        <FieldsPanel />
        <Visual />
      </div>
      <div className="w-[158px] shrink-0 border-l border-[#d0d0d0]">
        <div className="h-full w-[3px] bg-[repeating-linear-gradient(to_bottom,#555_0_3px,transparent_3px_6px)]" />
      </div>
      <FiltersRail />
      <VisualizationsPane />
    </div>
  );
}
